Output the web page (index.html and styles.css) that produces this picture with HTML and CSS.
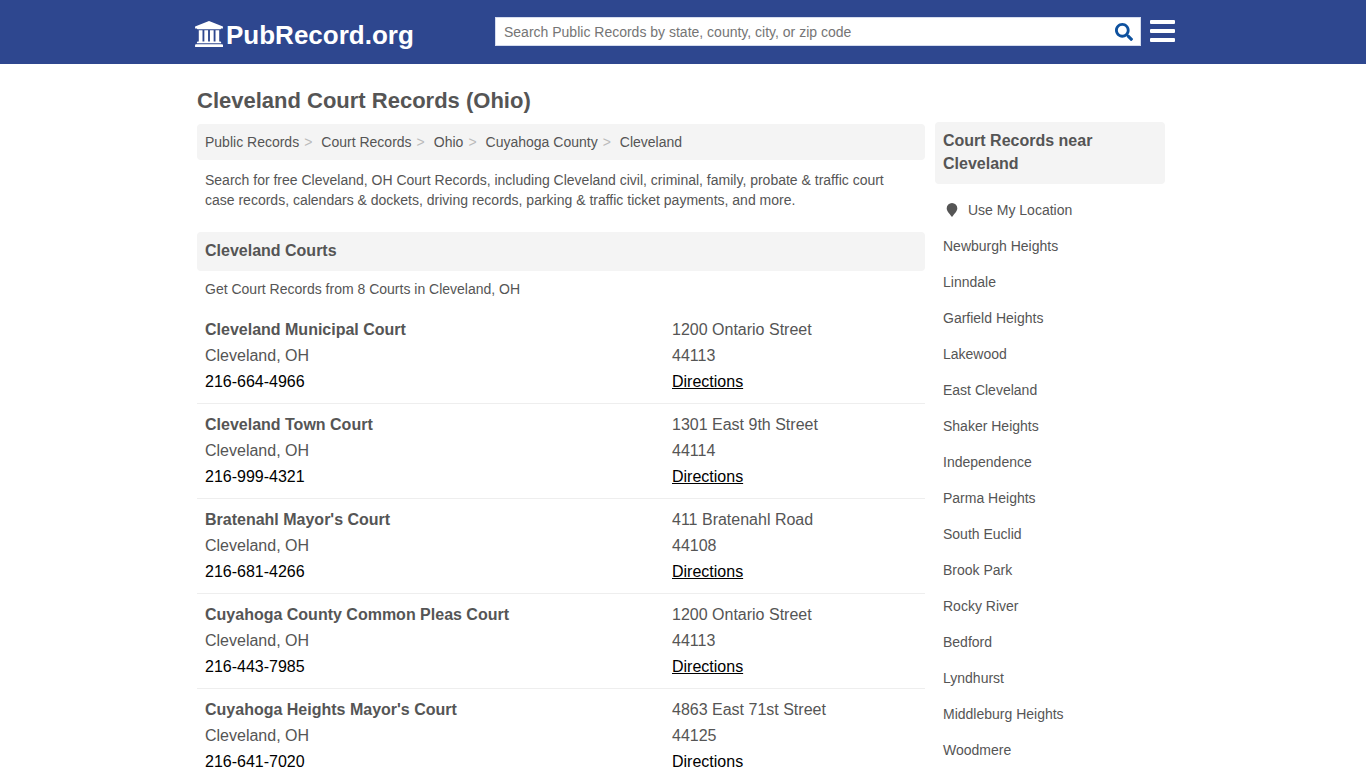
FILE: index.html
```html
<!DOCTYPE html>
<html lang="en">
<head>
<meta charset="utf-8">
<meta name="viewport" content="width=device-width, initial-scale=1">
<title>Cleveland Court Records (Ohio)</title>
<link rel="stylesheet" href="styles.css">
</head>
<body>
<header class="site-header">
  <div class="header-inner">
    <a class="logo" href="#">
      <svg class="logo-icon" viewBox="0 0 1920 1792" aria-hidden="true"><path fill="currentColor" d="M960 0l960 384v128h-128q0 26-20.500 45t-53.500 19H202q-33 0-53.500-19T128 512H0V384zM256 640h256v768h128V640h256v768h128V640h256v768h128V640h256v768h59q33 0 53.500 19t20.500 45v64H128v-64q0-26 20.500-45t53.500-19h54zM1851 1600q33 0 53.500 19t20.500 45v128H0v-128q0-26 20.500-45t53.500-19z"/></svg>
      <span>PubRecord.org</span>
    </a>
    <form class="search" role="search">
      <input class="search-input" type="text" aria-label="Search Public Records" placeholder="Search Public Records by state, county, city, or zip code">
      <button class="search-button" type="button" aria-label="Search">
        <svg class="search-icon" viewBox="0 0 512 512" aria-hidden="true"><path fill="currentColor" d="M505 442.700 405.300 343c-4.500-4.500-10.600-7-17-7H372c27.600-35.300 44-79.700 44-128C416 93.100 322.900 0 208 0S0 93.100 0 208s93.100 208 208 208c48.300 0 92.700-16.400 128-44v16.300c0 6.400 2.500 12.500 7 17l99.700 99.700c9.400 9.400 24.600 9.400 33.900 0l28.300-28.300c9.400-9.400 9.400-24.600.1-34zM208 336c-70.700 0-128-57.200-128-128 0-70.700 57.200-128 128-128 70.700 0 128 57.200 128 128 0 70.700-57.200 128-128 128z"/></svg>
      </button>
    </form>
    <button class="menu-button" type="button" aria-label="Menu"><span class="bar"></span><span class="bar"></span><span class="bar"></span></button>
  </div>
</header>

<div class="page">
  <main class="main">
    <h1 class="title">Cleveland Court Records (Ohio)</h1>
    <nav aria-label="Breadcrumb">
      <ol class="breadcrumb">
        <li><a href="#">Public Records</a></li>
        <li><a href="#">Court Records</a></li>
        <li><a href="#">Ohio</a></li>
        <li><a href="#">Cuyahoga County</a></li>
        <li><a href="#">Cleveland</a></li>
      </ol>
    </nav>
    <p class="intro">Search for free Cleveland, OH Court Records, including Cleveland civil, criminal, family, probate &amp; traffic court case records, calendars &amp; dockets, driving records, parking &amp; traffic ticket payments, and more.</p>
    <h2 class="section-title">Cleveland Courts</h2>
    <p class="summary">Get Court Records from 8 Courts in Cleveland, OH</p>
    <section class="court">
      <div><h3 class="court-name">Cleveland Municipal Court</h3><p>Cleveland, OH</p><a class="phone" href="#">216-664-4966</a></div>
      <div><p>1200 Ontario Street</p><p>44113</p><a class="directions" href="#">Directions</a></div>
    </section>
    <section class="court">
      <div><h3 class="court-name">Cleveland Town Court</h3><p>Cleveland, OH</p><a class="phone" href="#">216-999-4321</a></div>
      <div><p>1301 East 9th Street</p><p>44114</p><a class="directions" href="#">Directions</a></div>
    </section>
    <section class="court">
      <div><h3 class="court-name">Bratenahl Mayor's Court</h3><p>Cleveland, OH</p><a class="phone" href="#">216-681-4266</a></div>
      <div><p>411 Bratenahl Road</p><p>44108</p><a class="directions" href="#">Directions</a></div>
    </section>
    <section class="court">
      <div><h3 class="court-name">Cuyahoga County Common Pleas Court</h3><p>Cleveland, OH</p><a class="phone" href="#">216-443-7985</a></div>
      <div><p>1200 Ontario Street</p><p>44113</p><a class="directions" href="#">Directions</a></div>
    </section>
    <section class="court">
      <div><h3 class="court-name">Cuyahoga Heights Mayor's Court</h3><p>Cleveland, OH</p><a class="phone" href="#">216-641-7020</a></div>
      <div><p>4863 East 71st Street</p><p>44125</p><a class="directions" href="#">Directions</a></div>
    </section>
  </main>

  <aside class="sidebar">
    <h2 class="section-title">Court Records near Cleveland</h2>
    <ul class="nearby">
      <li><a class="locate" href="#"><svg class="pin" viewBox="0 0 12 14" aria-hidden="true"><path fill="currentColor" d="M6 0a5.300 5.300 0 0 1 5.300 5.300C11.300 8 9.500 9.500 6 14 2.500 9.500.7 8 .7 5.300A5.300 5.300 0 0 1 6 0z"/></svg>Use My Location</a></li>
      <li><a href="#">Newburgh Heights</a></li>
      <li><a href="#">Linndale</a></li>
      <li><a href="#">Garfield Heights</a></li>
      <li><a href="#">Lakewood</a></li>
      <li><a href="#">East Cleveland</a></li>
      <li><a href="#">Shaker Heights</a></li>
      <li><a href="#">Independence</a></li>
      <li><a href="#">Parma Heights</a></li>
      <li><a href="#">South Euclid</a></li>
      <li><a href="#">Brook Park</a></li>
      <li><a href="#">Rocky River</a></li>
      <li><a href="#">Bedford</a></li>
      <li><a href="#">Lyndhurst</a></li>
      <li><a href="#">Middleburg Heights</a></li>
      <li><a href="#">Woodmere</a></li>
    </ul>
  </aside>
</div>
</body>
</html>
```
FILE: styles.css
```css
* {
  box-sizing: border-box;
}

html {
  scrollbar-width: none;
}

body {
  margin: 0;
  background: #fff;
  color: #555;
  font: 14px/20px "Liberation Sans", Arial, sans-serif;
}

h1, h2, h3, p, ul, ol {
  margin: 0;
  padding: 0;
}

ul, ol {
  list-style: none;
}

a {
  color: inherit;
  text-decoration: none;
}

.site-header {
  background: #2e478f;
}

.header-inner {
  display: flex;
  align-items: flex-start;
  max-width: 984px;
  height: 64px;
  margin: 0 auto;
  padding-top: 17px;
}

.logo {
  display: flex;
  flex: 1;
  gap: 3px;
  padding-left: 4px;
  color: #fff;
  font-size: 26px;
  font-weight: bold;
  line-height: 36px;
}

.logo-icon {
  width: 28px;
  height: 26px;
  margin-top: 4px;
}

.search {
  display: flex;
  flex: 0 1 646px;
  height: 29px;
  border: 1px solid #d5dcee;
  background: #fff;
}

.search-input {
  flex: 1;
  min-width: 0;
  padding: 0 8px;
  border: 0;
  background: transparent;
  color: #555;
  font: inherit;
}

.search-input::placeholder {
  color: #757575;
}

.search-button {
  width: 32px;
  padding: 0 7px;
  border: 0;
  background: transparent;
  color: #0e519e;
}

.search-icon {
  display: block;
  width: 18px;
  height: 18px;
}

.menu-button {
  display: flex;
  flex-direction: column;
  gap: 5px;
  width: 34px;
  padding: 3px 0 0 9px;
  border: 0;
  background: transparent;
}

.bar {
  width: 25px;
  height: 4px;
  border-radius: 1px;
  background: #fff;
}

.page {
  display: grid;
  grid-template-columns: minmax(0, 1fr) 230px;
  gap: 10px;
  max-width: 984px;
  margin: 0 auto;
  padding: 0 10px 0 6px;
}

.title {
  padding: 23px 0 9px;
  font-size: 22px;
  line-height: 28px;
}

.breadcrumb {
  display: flex;
  flex-wrap: wrap;
  padding: 8px;
  border-radius: 4px;
  background: #f4f4f4;
}

.breadcrumb li + li::before {
  content: ">";
  padding: 0 9px 0 5px;
  color: #bbb;
}

.intro {
  padding: 10px 8px 22px;
}

.section-title {
  padding: 7px 8px 9px;
  border-radius: 4px;
  background: #f4f4f4;
  font-size: 16px;
  line-height: 23px;
}

.summary {
  padding: 8px 8px 10px;
}

.court {
  display: grid;
  grid-template-columns: minmax(0, 1fr) 245px;
  padding: 8px;
  border-bottom: 1px solid #eee;
  font-size: 16px;
  line-height: 26px;
}

.court-name {
  font-size: 16px;
}

.phone,
.directions {
  color: #000;
}

.directions {
  text-decoration: underline;
}

.sidebar {
  padding-top: 58px;
}

.nearby {
  padding-top: 8px;
}

.nearby a {
  display: block;
  padding: 8px;
}

.nearby .locate {
  display: flex;
  align-items: center;
  gap: 10px;
  padding-left: 11px;
}

.pin {
  width: 12px;
  height: 14px;
}
```
